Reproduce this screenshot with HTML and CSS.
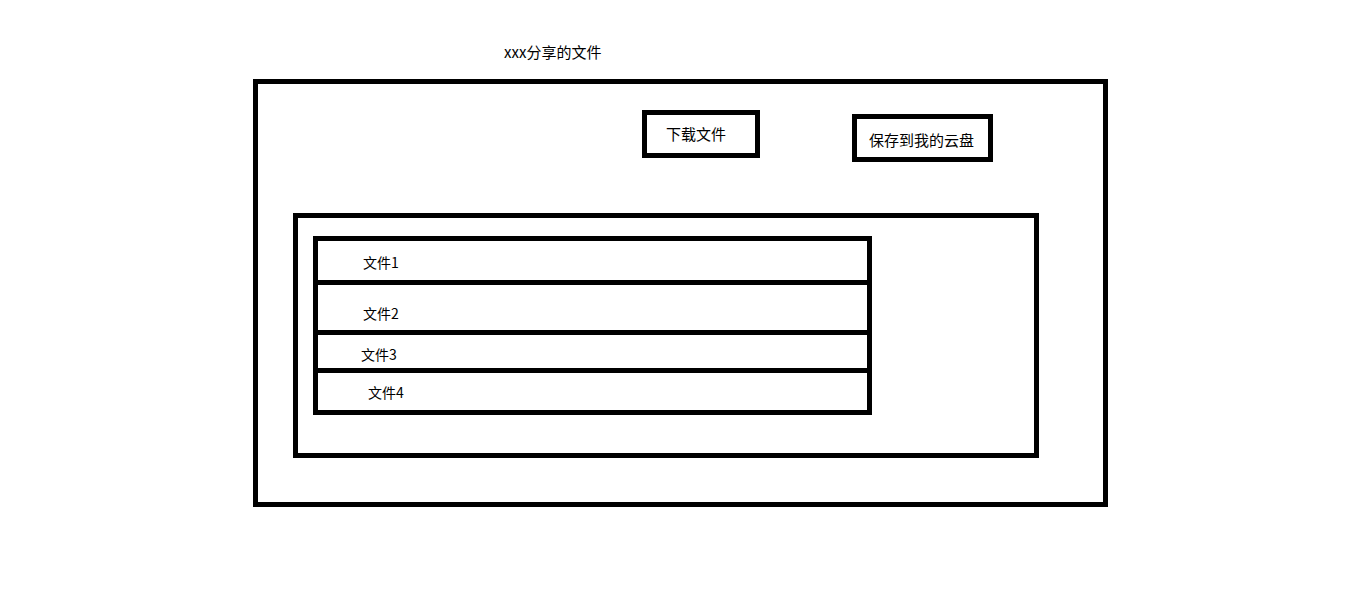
FILE: index.html
```html
<!DOCTYPE html>
<html lang="zh">
<head>
<meta charset="utf-8">
<title>xxx分享的文件</title>
<link rel="stylesheet" href="styles.css">
</head>
<body>
<div class="title">xxx分享的文件</div>
<div class="outer">
  <div class="toolbar">
    <div class="btn btn-download">下载文件</div>
    <div class="btn btn-save">保存到我的云盘</div>
  </div>
  <div class="panel">
    <div class="list">
      <div class="row r1">文件1</div>
      <div class="row r2">文件2</div>
      <div class="row r3">文件3</div>
      <div class="row r4">文件4</div>
    </div>
  </div>
</div>
</body>
</html>
```
FILE: styles.css
```css
* { box-sizing: border-box; }
html, body { margin: 0; padding: 0; background: #fff; }
body {
  font-family: "Noto Sans CJK SC", "Noto Sans", sans-serif;
  color: #000;
  width: 1360px;
  height: 601px;
  overflow: hidden;
}
.title {
  margin-top: 42px;
  padding-left: 504px;
  font-size: 15px;
  line-height: 20px;
  height: 20px;
}
.outer {
  margin-top: 17px;
  margin-left: 253px;
  width: 855px;
  height: 428px;
  border: 5px solid #000;
}
.toolbar {
  display: flex;
  align-items: flex-start;
  height: 77px;
}
.btn {
  border: 5px solid #000;
  font-size: 15px;
  line-height: 20px;
  white-space: nowrap;
}
.btn-download {
  margin-left: 384px;
  margin-top: 26px;
  width: 118px;
  height: 48px;
  padding: 9px 0 0 19px;
}
.btn-save {
  margin-left: 92px;
  margin-top: 30px;
  width: 141px;
  height: 48px;
  padding: 11px 0 0 12px;
}
.panel {
  margin-top: 52px;
  margin-left: 35px;
  width: 746px;
  height: 245px;
  border: 5px solid #000;
  padding: 18px 0 0 15px;
}
.list {
  width: 559px;
  border: 5px solid #000;
}
.row {
  font-size: 14px;
  line-height: 20px;
  border-top: 5px solid #000;
}
.row.r1 { border-top: 0; height: 39px; padding: 11px 0 0 45px; }
.row.r2 { height: 50px; padding: 18px 0 0 45px; }
.row.r3 { height: 38px; padding: 9px 0 0 43px; }
.row.r4 { height: 42px; padding: 9px 0 0 50px; }
```
